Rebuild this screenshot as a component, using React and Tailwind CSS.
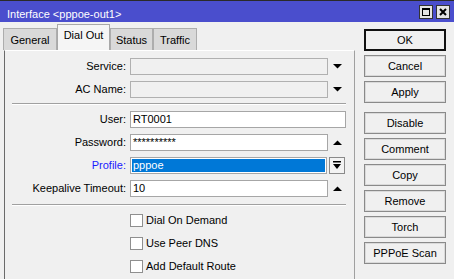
import React from "react";

const DownArrow = () => (
  <svg width="9" height="5" viewBox="0 0 9 5">
    <polygon points="0,0 9,0 4.5,4.5" fill="#000" />
  </svg>
);

const UpArrow = () => (
  <svg width="9" height="5" viewBox="0 0 9 5">
    <polygon points="0,5 9,5 4.5,0.5" fill="#000" />
  </svg>
);

const Label = ({ children, blue }) => (
  <span className={`w-[121px] shrink-0 text-right ${blue ? "text-[#1a1aff]" : "text-black"}`}>{children}</span>
);

const Field = ({ label, value, disabled, arrow, blue }) => (
  <div className="flex h-[17px] items-center">
    <Label blue={blue}>{label}</Label>
    <div className="ml-[4px] flex w-[216px] items-center">
      <div
        className={`h-[17px] border pl-[2px] leading-[15px] ${
          disabled ? "border-[#b0b0b0] bg-[#f0f0f0]" : "border-[#a6a6a6] bg-white"
        } ${arrow ? "w-[198px]" : "w-[216px]"}`}
      >
        {value}
      </div>
      {arrow && (
        <div className="flex w-[18px] justify-center">
          {arrow === "down" ? <DownArrow /> : <UpArrow />}
        </div>
      )}
    </div>
  </div>
);

const Check = ({ label }) => (
  <div className="flex h-[17px] items-center pl-[125px]">
    <span className="h-[13px] w-[13px] border border-[#8f8f8f] bg-white" />
    <span className="ml-[3px]">{label}</span>
  </div>
);

const Sep = ({ className }) => (
  <div className={`ml-[7px] mr-[8px] border-t border-b border-t-[#a0a0a0] border-b-white ${className}`} />
);

const Btn = ({ title, primary, className = "" }) => (
  <div
    className={`flex h-[22px] w-[82px] items-center justify-center bg-[#f0f0f0] ${
      primary ? "border-2 border-[#111]" : "border border-[#8a8a8a] shadow-[inset_0_0_0_1px_#dadada]"
    } ${className}`}
  >
    {title}
  </div>
);

const Tab = ({ title, active }) => (
  <div
    className={`flex items-center justify-center border border-b-0 ${
      active
        ? "h-[26px] border-[#a8a8a8] bg-[#f5f5f5] pb-[4px]"
        : "h-[22px] border-[#adadad] bg-[#d9d9d9] pt-[2px]"
    }`}
  >
    {title}
  </div>
);

export default function App() {
  return (
    <div className="h-[279px] w-[454px] overflow-hidden bg-[#f0f0f0] font-['Liberation_Sans',Arial,sans-serif] text-[11px] text-black">
      <div className="flex h-[22px] justify-between border-t border-[#2a2a2a] bg-[#4a4ecd]">
        <span className="pl-[7px] pt-[7px] leading-[13px] text-white">Interface &lt;pppoe-out1&gt;</span>
        <div className="mr-[4px] mt-[4px] flex gap-[3px]">
          <div className="flex h-[14px] w-[14px] items-center justify-center border border-[#333] bg-[#e4e4e4]">
            <span className="h-[8px] w-[8px] border border-t-2 border-black" />
          </div>
          <div className="flex h-[14px] w-[14px] items-center justify-center border border-[#333] bg-[#e4e4e4]">
            <svg width="8" height="8" viewBox="0 0 8 8">
              <path d="M1 1 L7 7 M7 1 L1 7" stroke="#000" strokeWidth="2" />
            </svg>
          </div>
        </div>
      </div>
      <div className="flex">
        <div className="flex w-[355px] flex-col">
          <div className="flex h-[28px] items-end pl-[3px]">
            <div className="w-[54px]"><Tab title="General" /></div>
            <div className="w-[53px]"><Tab title="Dial Out" active /></div>
            <div className="w-[43px]"><Tab title="Status" /></div>
            <div className="w-[44px]"><Tab title="Traffic" /></div>
          </div>
          <div className="ml-[4px] h-[240px] w-[351px] border-l border-r border-t border-l-[#6a6a6a] border-r-[#a0a0a0] border-t-white pt-[7px]">
            <div className="flex flex-col gap-[6px]">
              <Field label="Service:" disabled arrow="down" />
              <Field label="AC Name:" disabled arrow="down" />
            </div>
            <Sep className="mt-[5px]" />
            <div className="mt-[6px] flex flex-col gap-[6px]">
              <Field label="User:" value="RT0001" />
              <Field label="Password:" value="**********" arrow="up" />
              <div className="flex h-[17px] items-center">
                <Label blue>Profile:</Label>
                <div className="ml-[4px] flex items-center">
                  <div className="h-[17px] w-[197px] border border-[#a6a6a6] bg-white p-[1px]">
                    <div className="h-full bg-[#0078d7] pl-[1px] leading-[13px] text-white">pppoe</div>
                  </div>
                  <div className="ml-[2px] flex h-[17px] w-[16px] items-center justify-center border border-[#8a8a8a] bg-[#f3f3f3]">
                    <svg width="8" height="9" viewBox="0 0 8 9">
                      <rect x="0" y="0" width="8" height="1.5" fill="#000" />
                      <polygon points="0,3 8,3 4,8" fill="#000" />
                    </svg>
                  </div>
                </div>
              </div>
              <Field label="Keepalive Timeout:" value="10" arrow="up" />
            </div>
            <Sep className="mt-[7px]" />
            <div className="mt-[6px] flex flex-col gap-[6px]">
              <Check label="Dial On Demand" />
              <Check label="Use Peer DNS" />
              <Check label="Add Default Route" />
            </div>
          </div>
        </div>
        <div className="ml-[9px] mt-[7px] flex flex-col gap-[4px]">
          <Btn title="OK" primary />
          <Btn title="Cancel" />
          <Btn title="Apply" />
          <Btn title="Disable" className="mt-[5px]" />
          <Btn title="Comment" />
          <Btn title="Copy" />
          <Btn title="Remove" />
          <Btn title="Torch" />
          <Btn title="PPPoE Scan" />
        </div>
      </div>
    </div>
  );
}
